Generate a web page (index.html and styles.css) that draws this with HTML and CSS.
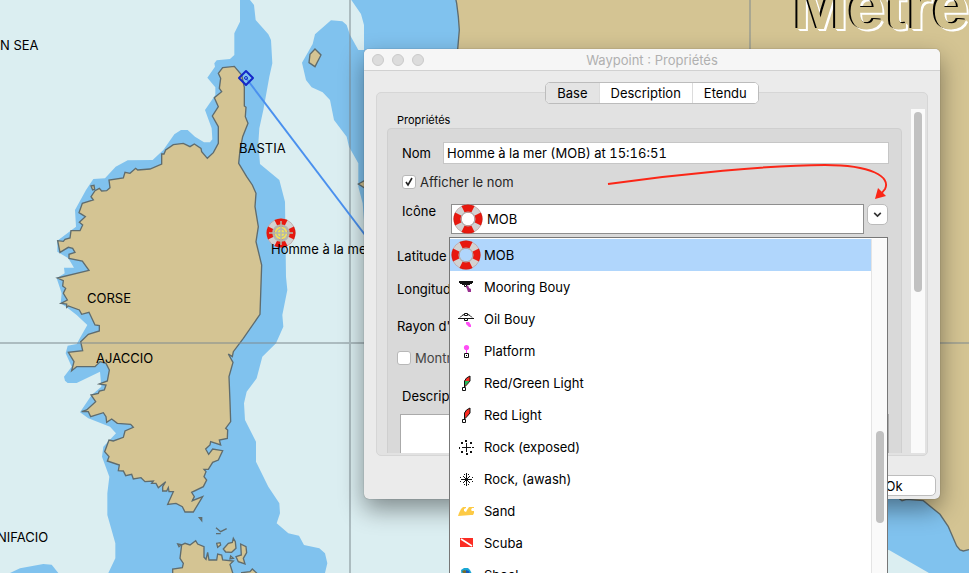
FILE: index.html
```html
<!DOCTYPE html>
<html lang="fr">
<head>
<meta charset="utf-8">
<title>Waypoint : Propriétés</title>
<link rel="stylesheet" href="styles.css">
</head>
<body>
<main class="desktop">
<svg class="map" viewBox="0 0 969 573" preserveAspectRatio="xMinYMin slice" role="img" aria-label="Corse">
  <defs>
    <symbol id="buoy" viewBox="-15 -15 30 30">
      <circle r="10.5" fill="none" stroke="#d2d2d2" stroke-width="8"/>
      <circle r="10.5" fill="none" stroke="#e8180f" stroke-width="8" pathLength="360" stroke-dasharray="54 36" stroke-dashoffset="27"/>
      <circle r="14.3" fill="none" stroke="#8c2a25" stroke-opacity=".35" stroke-width=".6"/>
      <circle r="7" fill="none" stroke="#b0b0b0" stroke-width="1.2"/>
    </symbol>
  </defs>
  <g transform="scale(.33333)">
    <g class="shallow">
      <path d="M720 0V65L703 100V165L690 177 650 181 643 190 645 200 622 233 646 262V285L615 330 635 385 637 418 630 427H612L585 410 563 390H543L523 403 490 450 458 480 383 481 347 500 315 535 280 537 258 570 225 630 228 680 215 690 172 722V755L205 775 222 803H192L194 820 170 835 185 880 182 910 200 922 230 945 262 975 242 1010 230 1032 203 1037 197 1060 215 1100 192 1130 195 1142 203 1149H230L300 1115 304 1160 275 1185 240 1237 265 1255 330 1280 348 1300 310 1340 306 1370 328 1430 322 1480V1545L346 1630V1675L325 1719H975L982 1690 975 1660 958 1645 912 1635 897 1607 865 1600 830 1570 840 1540 838 1510 805 1460 768 1385V1325L735 1260 732 1210 740 1175 770 1135 787 1070 828 1030 850 980 847 945 862 870 858 830 855 605 838 540 780 492 775 430 778 385 790 330 808 230 817 190 813 120 805 103 767 60 762 15 750 0Z"/>
      <path d="M30 1719 60 1705 130 1692 155 1694 175 1719Z"/>
      <path d="M1054 0 1083 42 1092 75V150H1075L1050 105 1040 75 1027 64 993 61 945 103 938 132 906 188 918 240 935 262 968 277 990 300 1002 360 1040 410 1047 440 1075 490V560L1088 610 1095 700H1400V0Z"/>
      <path d="M2600 1480H2907V1719H2787L2667 1650H2600Z"/>
    </g>
    <g class="land">
      <path d="M668 203 703 199 725 225 733 262V318L738 322 736 350 744 370 728 410 720 450 716 490 740 530 757 555 768 580 765 620 775 680 768 725 785 795 780 943 730 1015 700 1055 697 1070 685 1062 699 1087 687 1130 690 1205 692 1265 677 1285 683 1290 682 1315 658 1320 662 1335 632 1325 630 1335 617 1347 626 1363 638 1347 668 1352 655 1380 638 1387 625 1408H612L618 1415 612 1430 620 1440 610 1460 575 1477 583 1490 577 1502 608 1490 580 1536H555L547 1520 528 1510 503 1513 520 1475H507L505 1463 500 1473H488V1460L497 1445 475 1463 468 1450 455 1450 460 1443 435 1445 423 1433 400 1437 395 1423 377 1427 370 1413 355 1412 358 1395 322 1383 327 1370 314 1355 327 1320 340 1323 370 1312 375 1293 400 1282 392 1273 352 1270 335 1257 320 1267 318 1250 310 1238 272 1250 265 1235H245L260 1230 287 1205 273 1185 295 1180 298 1173 313 1170 318 1155 298 1152 322 1143 328 1110 318 1090 300 1085 285 1100H230L215 1112 222 1085 205 1057 248 1052 242 1025 265 1003 298 993V977L285 975 267 937 245 943 238 930 205 918 200 922V912L183 910 202 900 190 880 197 865 188 858 190 842 172 834 267 811 247 783 207 775V763L225 757 218 745 205 742 180 757 173 722 190 724 195 718 210 714 213 692H240L248 675 238 667 256 650 237 638 247 610 280 600 273 590 285 572 298 565 305 573 320 572 330 563 327 540 370 534 375 517 390 520 407 505 413 510 450 507 485 492V462L492 462 497 450 520 434 550 430 570 440 583 432 603 445 605 455 622 475 640 458 655 430V380L637 348 655 320 643 293 665 275 658 265 662 235 655 220Z"/>
      <path d="M273 558 282 556 284 568 278 570ZM945 147 963 165 945 200 927 188 930 163ZM1075 552 1100 538V568Z"/>
      <path d="M518 1740V1707L547 1703 550 1690 540 1675 545 1635 555 1630 570 1635 587 1622 593 1632 612 1640V1672L618 1678 623 1657 627 1680 650 1680 653 1662 665 1665 668 1680 700 1683 690 1693 705 1740ZM725 1718 750 1715 757 1707 770 1719V1740H725Z"/>
      <path d="M670 1647 685 1630 697 1627 700 1615 706 1625 708 1645 695 1657 677 1656ZM722 1632 738 1640 740 1658 730 1675 735 1692 715 1685 708 1670 724 1665ZM650 1630 660 1628 662 1635 653 1642ZM533 1632 544 1634 537 1640ZM598 1553 605 1553 605 1562ZM692 1668 700 1675 690 1677Z"/>
      <path d="M648 1583 662 1595 680 1586M648 1601H662" fill="none"/>
      <path d="M1366 -9 1370 10 1375 50 1378 90 1372 160V700H1800L2700 1498 2706 1502 2720 1498 2770 1502 2820 1543 2845 1580 2870 1638 2880 1650 2890 1653 2920 1646V-9Z"/>
    </g>
  </g>
  <g class="graticule"><path d="M350 0V573M750 0V573M0 343H969"/></g>
  <path class="route" d="M246 78 378 252"/>
  <path class="route-mark" d="M246 71 253 78 246 85 239 78Z"/>
  <circle class="route-mark thin" cx="246" cy="78" r="1.5"/>
  <g class="place">
    <text x="0" y="50">N SEA</text>
    <text x="239" y="153">BASTIA</text>
    <text x="87" y="303">CORSE</text>
    <text x="96" y="363">AJACCIO</text>
    <text x="-3" y="542">NIFACIO</text>
  </g>
  <circle cx="281" cy="233" r="9" fill="#f0e35c"/>
  <use href="#buoy" x="266" y="218" width="30" height="30"/>
  <g class="target"><circle cx="281" cy="233" r="8"/><circle cx="281" cy="233" r="4"/><path d="M281 221V245M269 233H293"/></g>
  <text class="place" x="271" y="254">Homme à la mer (MOB)</text>
</svg>
<div class="unit">Metre</div>

<section class="dialog" role="dialog" aria-labelledby="title">
  <header class="titlebar">
    <span class="lights"><i></i><i></i><i></i></span>
    <h1 id="title">Waypoint : Propriétés</h1>
  </header>
  <nav class="tabs">
    <button class="active">Base</button><button>Description</button><button>Etendu</button>
  </nav>
  <div class="panel">
    <div class="view">
      <h2>Propriétés</h2>
      <form class="group">
        <div class="row name"><label for="nom">Nom</label><input id="nom" type="text" value="Homme à la mer (MOB) at 15:16:51"></div>
        <div class="row show"><input id="show" type="checkbox" checked><label for="show">Afficher le nom</label></div>
        <div class="row icon">
          <label for="icone">Icône</label>
          <span class="combo">
            <svg viewBox="0 0 30 30"><use href="#buoy" width="30" height="30"/></svg>
            <select id="icone"><option>MOB</option></select>
          </span>
          <button type="button" class="drop" aria-label="Ouvrir la liste"><svg viewBox="0 0 10 10"><path d="M2 3.500 5 6.500 8 3.500"/></svg></button>
        </div>
        <div class="lines">
          <span>Latitude</span>
          <span>Longitude</span>
          <span class="radius">Rayon d'arrivée</span>
        </div>
        <div class="row circles"><input id="circles" type="checkbox"><label for="circles">Montrer</label></div>
        <div class="notes"><label for="notes">Description</label><textarea id="notes"></textarea></div>
      </form>
    </div>
    <div class="scroll"><i></i></div>
  </div>
  <footer><button>Ok</button></footer>
</section>

<svg class="arrow" viewBox="600 155 300 50" aria-hidden="true">
  <path d="M608 184C680 174 770 165 825 165C872 165 891 177 885 189L881 194" fill="none" stroke="#fb2617" stroke-width="1.900"/>
  <path d="M875 199 878 188 886 196Z" fill="#fb2617"/>
</svg>

<div class="popup">
  <ul role="listbox" aria-label="Icône">
    <li class="selected" role="option" aria-selected="true"><svg class="big" viewBox="0 0 30 30"><use href="#buoy" width="30" height="30"/></svg>MOB</li>
    <li role="option"><svg viewBox="0 0 24 24"><path d="M5 6H19V8H18V9H16V10H8V9H6V8H5Z" fill="#111"/><path d="M10.500 9.500H12.500V11.500H10.500Z" fill="#fff" stroke="#111"/><path d="M12 12 14 10 15 13 17 14V17H14L13 14Z" fill="#993090"/></svg>Mooring Bouy</li>
    <li role="option"><svg viewBox="0 0 24 24"><path d="M4 11.500H20M6 10.500 8 8.500 10 7.500H14L16 8.500 18 10.500" fill="none" stroke="#111"/><path d="M10.500 6.500H13.500V8.500H10.500ZM10.500 11.500H13.500V13.500H10.500Z" fill="#fff" stroke="#111"/><path d="M12 15H15L17 18V20H15L12 17Z" fill="#ff4df5"/></svg>Oil Bouy</li>
    <li role="option"><svg viewBox="0 0 24 24"><circle cx="12.500" cy="8.500" r="2.600" fill="#ff4df5"/><path d="M12 10H13V14H12Z" fill="#ff4df5"/><path d="M10.500 14.500H14.500V18.500H10.500Z" fill="#fff" stroke="#111"/><path d="M12 16H13V17H12Z"/></svg>Platform</li>
    <li role="option"><svg viewBox="0 0 24 24"><path d="M16 5 12.500 7 10.500 10V16L13 13.500 16 10Z" fill="#fb2c23" stroke="#111"/><path d="M11 10H15.500L13 13 11 14.500Z" fill="#20b858"/><path d="M8.500 16.500H11.500V19.500H8.500Z" fill="#fff" stroke="#111"/></svg>Red/Green Light</li>
    <li role="option"><svg viewBox="0 0 24 24"><path d="M16 5 12.500 7 10.500 10V16L13 13.500 16 10Z" fill="#fb2c23" stroke="#111"/><path d="M8.500 16.500H11.500V19.500H8.500Z" fill="#fff" stroke="#111"/></svg>Red Light</li>
    <li role="option"><svg viewBox="0 0 24 24"><path d="M12 8H13V12H17V13H13V17H12V13H8V12H12ZM11 5H13V7H11ZM12 18H14V20H12ZM5 12H6V14H5ZM18 12H20V13H18ZM7 7H9V9H7ZM16 7H18V9H16ZM7 16H9V18H7ZM16 16H18V18H16Z" fill="#111"/></svg>Rock (exposed)</li>
    <li role="option"><svg viewBox="0 0 24 24"><path d="M12 6H13V12H18V13H13V19H12V13H7V12H12ZM10 10H11V11H10ZM14 10H15V11H14ZM10 14H11V15H10ZM14 14H15V15H14ZM9 9H10V10H9ZM15 9H16V10H15ZM9 15H10V16H9ZM15 15H16V16H15ZM6 10H7V11H6ZM10 7H11V8H10ZM14 7H15V8H14ZM18 10H19V11H18ZM6 14H7V15H6ZM18 14H19V15H18ZM10 17H11V18H10ZM14 17H15V18H14ZM11 11H14V14H11Z" fill="#111"/></svg>Rock, (awash)</li>
    <li role="option"><svg viewBox="0 0 24 24"><path d="M4 17 5 14 7 10 9 8H12V9L10 10V12L12 13 13 11 15 8H20V9H18L17 11 18 12H20V14L19 16H17L4 17Z" fill="#fdca45"/></svg>Sand</li>
    <li role="option"><svg viewBox="0 0 24 24"><path d="M6 7H19V16H6Z" fill="#fb2c23"/><path d="M7 8 18 15" stroke="#fff" stroke-width="1.500"/></svg>Scuba</li>
    <li role="option"><svg viewBox="0 0 24 24"><path d="M7 7 10 5H14L16 7 18 11 16 17H8Z" fill="#1aa7d4"/><path d="M8 8 11 7 13 9 10 11Z" fill="#7b6a2a"/><path d="M12 7 15 8 16 12 12 10Z" fill="#1458b8"/></svg>Shoal</li>
  </ul>
  <div class="track"><i></i></div>
</div>
</main>
</body>
</html>
```
FILE: styles.css
```css
* { box-sizing: border-box; }
body { margin: 0; font: 13px/16px Inter, "Noto Sans", sans-serif; color: #000; }
button, input, select, textarea { font: inherit; color: inherit; margin: 0; }

.desktop { position: relative; height: 100vh; overflow: hidden; background: #dbeef1; }
.map { display: block; width: 100%; height: 100%; }
.shallow { fill: #80c2ee; }
.land { fill: #d4c493; stroke: #5f6c6e; stroke-width: 4; }
.graticule { fill: none; stroke: #7d8a90; stroke-opacity: .5; stroke-width: 2; }
.route { stroke: #4a90ee; stroke-width: 2; }
.route-mark { fill: none; stroke: #1428c8; stroke-width: 2; stroke-linejoin: round; }
.thin { stroke-width: 1; }
.place { font-size: 13px; }
.target { fill: none; stroke: #b4b8ac; stroke-width: 1.5px; }
.unit { position: absolute; left: 793px; top: -32px; font: bold 66px/76px "Liberation Sans", sans-serif; color: #d0c08c; text-shadow: -2px -1px #000, -1px -1px #000, 2px 2px #fff, 1px 1px #fff; }

.dialog {
  position: absolute; left: 364px; top: 49px; width: 576px;
  background: #ebebeb; border-radius: 5px;
  box-shadow: 0 0 1px rgba(0,0,0,.5), 0 10px 24px rgba(0,0,0,.42);
}
.titlebar { position: relative; height: 22px; background: #f6f6f6; border-bottom: 1px solid #d1d1d1; border-radius: 5px 5px 0 0; }
.titlebar h1 { margin: 0; font-size: 13px; line-height: 22px; font-weight: 400; text-align: center; color: #b0b0b0; }
.lights { position: absolute; left: 8px; top: 5px; display: flex; gap: 8px; }
.lights i { width: 12px; height: 12px; border-radius: 50%; background: #dcdcdc; border: 1px solid #cacaca; }

.tabs { position: relative; z-index: 1; display: flex; width: max-content; margin: 11px auto 0; border: 1px solid #bcbcbc; border-radius: 5px; background: #fff; overflow: hidden; }
.tabs button { height: 20px; padding: 0 11px; border: 0; border-left: 1px solid #dcdcdc; background: #fff; line-height: 18px; }
.tabs .active { border-left: 0; background: #e4e4e4; }

.panel { display: flex; justify-content: space-between; height: 364px; margin: -12px 12px 0; padding: 16px 2px 2px 10px; background: #e2e2e2; border: 1px solid #d6d6d6; border-radius: 5px; }
.view { width: 515px; overflow: hidden; }
.view h2 { margin: 4px 0 0 10px; font-size: 11px; line-height: 15px; font-weight: 400; }
.group { height: 340px; padding: 13px 12px 0 9px; background: #d9d9d9; border: 1px solid #cfcfcf; border-radius: 4px; }
.scroll { width: 14px; background: #fafafa; padding: 3px; }
.scroll i { display: block; height: 180px; width: 8px; border-radius: 4px; background: #c1c1c1; }

.row { display: flex; align-items: center; padding-left: 5px; }
.name { gap: 12px; }
.name input { flex: 1; height: 22px; padding: 2px 3px; border: 1px solid #c6c6c6; background: #fff; font-variant-numeric: tabular-nums; }
.show { margin-top: 10px; gap: 4px; color: #262626; }
input[type=checkbox] { appearance: none; flex: none; width: 14px; height: 14px; border: 1px solid #b8b8b8; border-radius: 3px; background: #fff; }
#show { background: #fff url("data:image/svg+xml,%3Csvg xmlns='http://www.w3.org/2000/svg' viewBox='0 0 12 12'%3E%3Cpath d='M3 6 5 9 9 2' fill='none' stroke='%23222' stroke-width='1.6'/%3E%3C/svg%3E") center / 12px; }
.icon { margin-top: 14px; align-items: flex-start; }
.icon label { width: 49px; line-height: 14px; }
.combo { position: relative; flex: 1; }
.combo svg { position: absolute; left: 2px; top: 0; width: 30px; height: 30px; }
.combo select { display: block; width: 100%; height: 30px; padding: 0 0 0 35px; appearance: none; background: #fff; border: 1px solid #8e8e8e; border-radius: 0; }
.drop { width: 21px; height: 21px; margin: 0 1px 0 3px; padding: 0; border: 1px solid #bbb; border-radius: 5px; background: #fff; display: grid; place-items: center; }
.drop svg { width: 11px; height: 11px; fill: none; stroke: #333; stroke-width: 1.5px; }
.lines { display: grid; gap: 17px; margin-top: 14px; }
.radius { margin-top: 4px; }
.circles { margin-top: 16px; padding-left: 0; gap: 4px; color: #444; }
.notes { margin-top: 22px; padding-left: 3px; }
.notes label { display: block; padding-left: 2px; }
.notes textarea { display: block; width: 100%; height: 60px; margin-top: 10px; border: 1px solid #aaa; background: #fff; resize: none; }

footer { display: flex; justify-content: flex-end; padding: 19px 4px 3px; }
footer button { width: 84px; height: 21px; padding: 0; border: 1px solid #bdbdbd; border-radius: 5px; background: #fff; line-height: 18px; }

.arrow { position: absolute; left: 600px; top: 155px; width: 300px; height: 50px; pointer-events: none; }

.popup { position: absolute; left: 449px; top: 237px; bottom: 0; width: 439px; display: flex; overflow: hidden; background: #fff; border: 1px solid #777; border-bottom: 0; padding-top: 1px; }
.popup ul { flex: 1; margin: 0; padding: 0; list-style: none; }
.popup li { display: flex; align-items: center; height: 32px; gap: 6px; padding-left: 4px; }
.popup li svg { width: 24px; height: 24px; }
.popup li .big { width: 30px; height: 30px; margin: 0 -3px; }
.popup .selected { background: #b0d6fc; }
.track { width: 16px; padding: 192px 4px 0; background: #fafafa; border-left: 1px solid #e4e4e4; }
.track i { display: block; width: 8px; height: 92px; border-radius: 4px; background: #c1c1c1; }
```
